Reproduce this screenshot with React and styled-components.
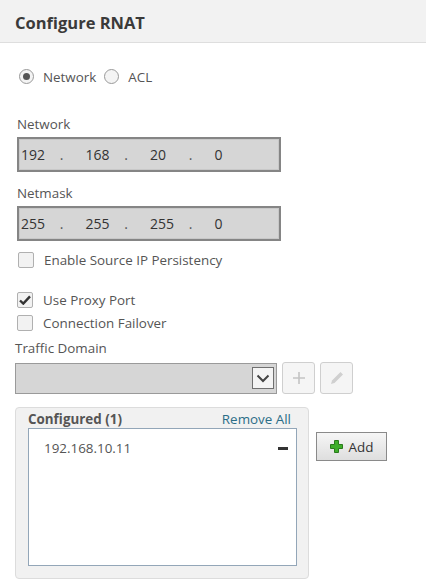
import React from 'react'
import styled, { createGlobalStyle } from 'styled-components'

const Global = createGlobalStyle`
  body {
    margin: 0;
    background: #fff;
    font-family: "Open Sans", "Noto Sans", sans-serif;
    color: #555;
  }
`

function IpField({ parts }) {
    return (
        <IpBox>
            {parts.map((p, i) => (
                <Octet key={i}>
                    <span>{p}</span>
                    {i < 3 && <Dot>.</Dot>}
                </Octet>
            ))}
        </IpBox>
    )
}

function Check({ checked, children, gap, indent }) {
    return (
        <CheckRow gap={gap} indent={indent}>
            <CheckBox>
                {checked && (
                    <svg width="12" height="10" viewBox="0 0 12 10">
                        <path d="M1 5.5 L4.3 8.6 L11 1.4" fill="none" stroke="#333" strokeWidth="2.4" />
                    </svg>
                )}
            </CheckBox>
            {children}
        </CheckRow>
    )
}

export default function App() {
    return (
        <Page>
            <Global />
            <Header>Configure RNAT</Header>
            <Body>
                <RadioRow>
                    <Radio on />
                    <RadioLabel>Network</RadioLabel>
                    <Radio />
                    <RadioLabel>ACL</RadioLabel>
                </RadioRow>

                <Label top={30}>Network</Label>
                <IpField parts={['192', '168', '20', '0']} />
                <Label top={12}>Netmask</Label>
                <IpField parts={['255', '255', '255', '0']} />

                <Check gap={10} indent={1}>Enable Source IP Persistency</Check>
                <Check gap={23} checked>Use Proxy Port</Check>
                <Check gap={6}>Connection Failover</Check>

                <Label top={8} left={-2}>Traffic Domain</Label>
                <DomainRow>
                    <Select>
                        <Arrow>
                            <svg width="14" height="9" viewBox="0 0 14 9">
                                <path d="M1.5 1.5 L7 7 L12.5 1.5" fill="none" stroke="#444" strokeWidth="2" />
                            </svg>
                        </Arrow>
                    </Select>
                    <IconButton>
                        <svg width="14" height="14" viewBox="0 0 14 14">
                            <path d="M7 1 V13 M1 7 H13" stroke="#c4c4c4" strokeWidth="1.6" />
                        </svg>
                    </IconButton>
                    <IconButton>
                        <svg width="16" height="16" viewBox="0 0 16 16">
                            <path d="M2 14 L3 10.5 L11.5 2 L14 4.5 L5.5 13 Z" fill="#d0d0d0" />
                        </svg>
                    </IconButton>
                </DomainRow>

                <BottomRow>
                    <Configured>
                        <ConfHead>
                            <ConfTitle>Configured (1)</ConfTitle>
                            <RemoveAll>Remove All</RemoveAll>
                        </ConfHead>
                        <List>
                            <Item>
                                <span>192.168.10.11</span>
                                <Minus />
                            </Item>
                        </List>
                    </Configured>
                    <AddButton>
                        <svg width="13" height="13" viewBox="0 0 13 13">
                            <path d="M4.5 0.5 H8.5 V4.5 H12.5 V8.5 H8.5 V12.5 H4.5 V8.5 H0.5 V4.5 H4.5 Z" fill="#3fae2a" stroke="#2a7a1c" strokeWidth="1" />
                        </svg>
                        Add
                    </AddButton>
                </BottomRow>
            </Body>
        </Page>
    )
}

const Page = styled.div`
    width: 426px;
    height: 581px;
    overflow: hidden;
`

const Header = styled.div`
    height: 43px;
    box-sizing: border-box;
    background: #f2f2f2;
    border-bottom: 1px solid #dedede;
    padding: 11px 15px 0;
    font-size: 16.5px;
    font-weight: 700;
    color: #3a3a3a;
`

const Body = styled.div`
    padding: 0 0 0 17px;
    display: flex;
    flex-direction: column;
    align-items: flex-start;
`

const RadioRow = styled.div`
    display: flex;
    align-items: center;
    margin-top: 25px;
    margin-left: 2px;
    height: 17px;
`

const Radio = styled.span`
    width: 13px;
    height: 13px;
    border-radius: 50%;
    border: 1px solid #9a9a9a;
    background: #f4f4f4;
    position: relative;
    box-sizing: content-box;
    &::after {
        content: '';
        display: ${p => (p.on ? 'block' : 'none')};
        position: absolute;
        left: 3px;
        top: 3px;
        width: 7px;
        height: 7px;
        border-radius: 50%;
        background: #555;
    }
`

const RadioLabel = styled.span`
    font-size: 13.4px;
    color: #555;
    margin: 0 8px 0 9px;
`

const Label = styled.div`
    margin-top: ${p => p.top}px;
    margin-left: ${p => p.left || 0}px;
    font-size: 13.4px;
    color: #555;
    line-height: 18px;
    margin-bottom: 4px;
`

const IpBox = styled.div`
    width: 264px;
    height: 35px;
    box-sizing: border-box;
    border: 2px solid #858585;
    background: #d6d6d6;
    box-shadow: inset 0 0 0 1px #c8c8c8;
    display: flex;
    align-items: center;
    padding-left: 2px;
    font-size: 14px;
    color: #333;
`

const Octet = styled.div`
    width: 67px;
    display: flex;
`

const Dot = styled.span`
    margin-left: auto;
    margin-right: 22px;
    color: #555;
`

const CheckRow = styled.div`
    display: flex;
    align-items: center;
    margin-top: ${p => p.gap}px;
    margin-left: ${p => p.indent || 0}px;
    font-size: 13.4px;
    color: #555;
    height: 17px;
`

const CheckBox = styled.span`
    width: 14px;
    height: 14px;
    border: 1px solid #b0b0b0;
    border-radius: 2px;
    background: #f2f2f2;
    display: flex;
    align-items: center;
    justify-content: center;
    margin-right: 10px;
    box-sizing: content-box;
`

const DomainRow = styled.div`
    display: flex;
    align-items: center;
    gap: 5px;
    margin-left: -2px;
    margin-top: 1px;
`

const Select = styled.div`
    width: 262px;
    height: 31px;
    box-sizing: border-box;
    background: #d6d6d6;
    border: 1px solid #9a9a9a;
    display: flex;
    align-items: center;
    justify-content: flex-end;
    padding-right: 2px;
`

const Arrow = styled.div`
    width: 22px;
    height: 22px;
    box-sizing: border-box;
    border: 1px solid #707070;
    background: #f4f4f4;
    display: flex;
    align-items: center;
    justify-content: center;
`

const IconButton = styled.div`
    width: 33px;
    height: 32px;
    box-sizing: border-box;
    border: 1px solid #cfcfcf;
    border-radius: 3px;
    background: #f5f5f5;
    display: flex;
    align-items: center;
    justify-content: center;
`

const BottomRow = styled.div`
    display: flex;
    align-items: flex-start;
    margin-top: 13px;
    margin-left: -2px;
`

const Configured = styled.div`
    width: 294px;
    height: 172px;
    box-sizing: border-box;
    background: #f1f1f1;
    border: 1px solid #dcdcdc;
    border-radius: 4px;
    padding: 3px 11px 0 12px;
`

const ConfHead = styled.div`
    display: flex;
    justify-content: space-between;
    align-items: baseline;
    font-size: 13.4px;
    line-height: 17px;
    padding-right: 6px;
`

const ConfTitle = styled.span`
    font-weight: 700;
    color: #555;
`

const RemoveAll = styled.span`
    color: #2b6d87;
`

const List = styled.div`
    height: 138px;
    box-sizing: border-box;
    background: #fff;
    border: 1px solid #93a6b8;
    padding: 10px 8px 0 15px;
`

const Item = styled.div`
    display: flex;
    justify-content: space-between;
    align-items: center;
    font-size: 13.4px;
    color: #555;
`

const Minus = styled.span`
    width: 10px;
    height: 3px;
    background: #333;
`

const AddButton = styled.div`
    margin-left: 7px;
    margin-top: 25px;
    width: 71px;
    height: 29px;
    box-sizing: border-box;
    border: 1px solid #8a8a8a;
    background: linear-gradient(#f6f6f6, #dedede);
    display: flex;
    align-items: center;
    justify-content: center;
    gap: 6px;
    font-size: 13.4px;
    color: #333;
`
